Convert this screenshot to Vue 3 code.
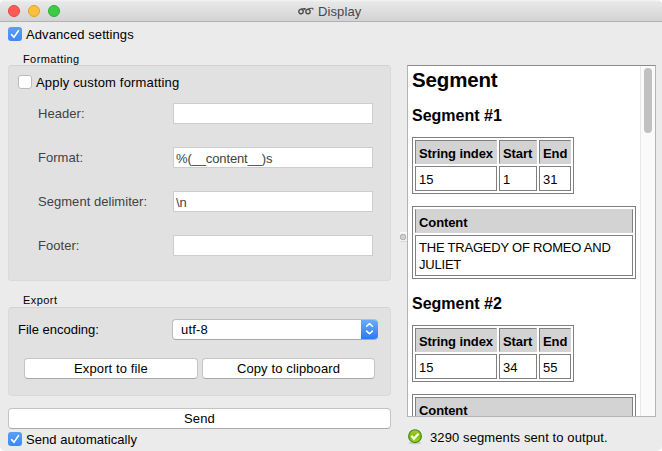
<script setup>
import { ref } from 'vue'

const advanced = ref(true)
const customFormatting = ref(false)
const autoSend = ref(true)

const fields = ref([
  { label: 'Header:', value: '' },
  { label: 'Format:', value: '%(__content__)s' },
  { label: 'Segment delimiter:', value: '\\n' },
  { label: 'Footer:', value: '' },
])

const segments = [
  { id: 1, index: 15, start: 1, end: 31, content: 'THE TRAGEDY OF ROMEO AND JULIET' },
  { id: 2, index: 15, start: 34, end: 55, content: '' },
]
</script>

<template>
  <div class="window">
    <header class="titlebar">
      <div class="lights">
        <i class="light red"></i><i class="light yellow"></i><i class="light green"></i>
      </div>
      <svg class="glasses" width="16" height="10" viewBox="0 0 16 10" fill="none" stroke="#505050">
        <ellipse cx="3" cy="5.6" rx="2.2" ry="2.2" stroke-width="1.4" />
        <ellipse cx="10" cy="5.6" rx="2.2" ry="2.2" stroke-width="1.4" />
        <path d="M2.6 3 Q5 2.4 7.8 2.6 M9.6 3 Q12 2.2 14.2 2.3 Q15.4 2.5 14.8 3.8 M5.4 4.6 Q6.4 2.8 7.8 2.6" stroke-width="1.1" />
      </svg>
      <span class="title">Display</span>
    </header>

    <main class="body">
      <section class="left">
        <label class="check" @click="advanced = !advanced">
          <i class="box" :class="{ on: advanced }">
            <svg v-if="advanced" width="14" height="14" viewBox="0 0 14 14"><path d="M3.6 7.6 6 10.2 10.5 3.6" fill="none" stroke="#fff" stroke-width="1.6" stroke-linecap="round" /></svg>
          </i>
          <span class="adv-text">Advanced settings</span>
        </label>

        <div class="caption formatting-caption">Formatting</div>
        <div class="group formatting">
          <label class="check" @click="customFormatting = !customFormatting">
            <i class="box" :class="{ on: customFormatting }"></i>
            <span class="custom-text">Apply custom formatting</span>
          </label>
          <div class="fields">
            <div v-for="f in fields" :key="f.label" class="field">
              <span class="field-label">{{ f.label }}</span>
              <div class="input">{{ f.value }}</div>
            </div>
          </div>
        </div>

        <div class="caption export-caption">Export</div>
        <div class="group export">
          <div class="encoding">
            <span class="encoding-label">File encoding:</span>
            <div class="select">
              <span>utf-8</span>
              <i class="arrows">
                <svg width="17" height="21" viewBox="0 0 17 21" fill="none" stroke="#fff" stroke-width="1.5" stroke-linecap="round" stroke-linejoin="round"><path d="M5.6 7.3 8.5 4.6 11.4 7.3M5.6 12.1 8.5 14.8 11.4 12.1" /></svg>
              </i>
            </div>
          </div>
          <div class="buttons">
            <button class="btn export-btn">Export to file</button>
            <button class="btn copy-btn">Copy to clipboard</button>
          </div>
        </div>

        <button class="btn send">Send</button>
        <label class="check auto" @click="autoSend = !autoSend">
          <i class="box" :class="{ on: autoSend }">
            <svg v-if="autoSend" width="14" height="14" viewBox="0 0 14 14"><path d="M3.6 7.6 6 10.2 10.5 3.6" fill="none" stroke="#fff" stroke-width="1.6" stroke-linecap="round" /></svg>
          </i>
          <span class="auto-text">Send automatically</span>
        </label>
      </section>

      <div class="splitter"><i class="grip"></i></div>

      <section class="right">
        <div class="viewer">
          <div class="document">
            <h1>Segment</h1>
            <article v-for="s in segments" :key="s.id" class="segment">
              <h2>Segment #{{ s.id }}</h2>
              <div class="table position">
                <b class="th wide">String index</b><b class="th">Start</b><b class="th">End</b>
                <span class="td">{{ s.index }}</span><span class="td">{{ s.start }}</span><span class="td">{{ s.end }}</span>
              </div>
              <div class="table content">
                <b class="th">Content</b>
                <span class="td text">{{ s.content }}</span>
              </div>
            </article>
          </div>
          <div class="scrollbar"><i class="thumb"></i></div>
        </div>
        <footer class="status">
          <svg width="16" height="16" viewBox="0 0 16 16">
            <defs>
              <linearGradient id="ok" x1="0" y1="0" x2="0" y2="1">
                <stop offset="0" stop-color="#a4ce35" />
                <stop offset=".5" stop-color="#80bd05" />
                <stop offset="1" stop-color="#9edc19" />
              </linearGradient>
            </defs>
            <ellipse cx="8" cy="14" rx="6.5" ry="1.4" fill="#cfcfcf" />
            <circle cx="8" cy="7.2" r="6.4" fill="url(#ok)" stroke="#43891c" stroke-width="1.1" />
            <path d="M4.3 6.8 7 9.5 11.6 4.7" fill="none" stroke="#fff" stroke-width="2.3" />
          </svg>
          <span class="status-text">3290 segments sent to output.</span>
        </footer>
      </section>
    </main>
  </div>
</template>

<style>
body {
  margin: 0;
  background: #fff;
}
</style>

<style scoped>
* {
  box-sizing: border-box;
}

.window {
  width: 662px;
  height: 451px;
  overflow: hidden;
  border-radius: 5px;
  background: #ebebeb;
  color: #000;
  font: 13px/16px "Liberation Sans", Arial, sans-serif;
}

.titlebar {
  display: flex;
  align-items: center;
  height: 22px;
  border-bottom: 1px solid #b1b1b1;
  background: linear-gradient(#f4f4f4 0, #e8e8e8 2px, #d3d3d3 100%);
}

.lights {
  display: flex;
  gap: 8px;
  width: 290px;
  padding-left: 8px;
}

.light {
  width: 12px;
  height: 12px;
  border: 1px solid;
  border-radius: 50%;
}

.red { background: #fc5b57; border-color: #e2463f; }
.yellow { background: #fbbf3d; border-color: #dfa02d; }
.green { background: #3bcb46; border-color: #2baf33; }

.glasses {
  margin-left: 8px;
}

.title {
  margin-left: 4px;
  padding-top: 2px;
  color: #474747;
  letter-spacing: 0.1px;
}

.body {
  display: flex;
  height: 429px;
  padding-left: 8px;
}

.left {
  width: 383px;
  padding-top: 5px;
}

.check {
  display: flex;
  align-items: center;
  gap: 4px;
  height: 14px;
}

.check span {
  padding-top: 2px;
}

.adv-text {
  letter-spacing: 0.09px;
}

.custom-text {
  letter-spacing: 0.17px;
}

.auto-text {
  letter-spacing: 0.07px;
}

.box {
  width: 14px;
  height: 14px;
  border: 1px solid #bcbcbc;
  border-radius: 3px;
  background: #fff;
}

.box.on {
  border: 0;
  background: linear-gradient(#5c9ff8, #4186f7);
}

.box svg {
  display: block;
}

.caption {
  padding-left: 15px;
  font-size: 11px;
  line-height: 14px;
}

.formatting-caption {
  margin-top: 11px;
  letter-spacing: 0.4px;
}

.export-caption {
  margin-top: 12px;
  letter-spacing: 0.45px;
}

.group {
  border: 1px solid #dadada;
  border-top-color: #d2d2d2;
  border-radius: 4px;
  background: #e1e1e1;
}

.formatting {
  height: 216px;
  padding: 9px 0 0 9px;
  margin-top: -1px;
}

.fields {
  display: grid;
  gap: 23px;
  padding: 14px 0 0 20px;
}

.field {
  display: flex;
  align-items: center;
  height: 21px;
  color: #424242;
}

.field-label {
  width: 135px;
  letter-spacing: 0.04px;
}

.input {
  width: 200px;
  height: 21px;
  padding: 3px 2px 0;
  border: 1px solid #cdcdcd;
  background: #fff;
  letter-spacing: -0.13px;
}

.export {
  height: 89px;
  padding-top: 11px;
}

.encoding {
  display: flex;
  align-items: center;
  padding-left: 9px;
}

.encoding-label {
  width: 154px;
}

.select {
  display: flex;
  align-items: center;
  justify-content: space-between;
  width: 206px;
  height: 21px;
  padding-left: 8px;
  overflow: hidden;
  border: 1px solid #bdbdbd;
  border-right: 0;
  border-bottom-color: #a9a9a9;
  border-radius: 4px;
  background: #fff;
  letter-spacing: 0.2px;
}

.arrows {
  width: 17px;
  height: 21px;
  background: linear-gradient(#6bb0fb, #2d74f7);
}

.arrows svg {
  display: block;
}

.buttons {
  display: flex;
  gap: 4px;
  padding: 18px 0 0 15px;
}

.btn {
  display: block;
  height: 21px;
  padding: 0;
  border: 1px solid #c4c4c4;
  border-bottom-color: #a9a9a9;
  border-radius: 4px;
  background: #fff;
  color: #000;
  font: inherit;
  letter-spacing: 0.12px;
}

.export-btn { width: 174px; }
.copy-btn { width: 173px; }

.send {
  width: 383px;
  margin-top: 12px;
}

.auto {
  margin-top: 3px;
}

.splitter {
  display: flex;
  align-items: center;
  width: 16px;
  padding: 0 0 0 9px;
}

.grip {
  width: 7px;
  height: 10px;
  border-top: 1px solid #fafafa;
  border-bottom: 1px solid #dadada;
  background: radial-gradient(circle at 3px 4px, #cfcfcf 0 2px, #b5b5b5 2.5px 3px, #f4f4f4 3.6px);
}

.right {
  width: 249px;
  padding-top: 43px;
}

.viewer {
  display: flex;
  height: 352px;
  overflow: hidden;
  border: 1px solid #b4b4b4;
  border-top-color: #8c8c8c;
  background: #fff;
}

.document {
  width: 232px;
  height: 350px;
  padding-left: 4px;
  overflow: hidden;
}

h1, h2 {
  margin: 0;
  font-weight: bold;
}

h1 {
  margin-top: 2px;
  font-size: 20.5px;
  line-height: 24px;
  letter-spacing: -0.15px;
}

h2 {
  padding-top: 14px;
  height: 45px;
  font-size: 16px;
  line-height: 20px;
}

.table {
  display: grid;
  gap: 2px;
  padding: 2px;
  border: 1px solid #808080;
}

.position {
  width: 162px;
  height: 57px;
  grid-template-columns: 82px 38px 32px;
  grid-template-rows: 24px 25px;
}

.content {
  width: 224px;
  height: 73px;
  margin-top: 12px;
  grid-template-rows: 24px 41px;
}

.segment + .segment h2 {
  height: 46px;
  padding-top: 15px;
}

.th, .td {
  padding: 4px 3px 0;
  border: 1px solid #808080;
  line-height: 17px;
  white-space: nowrap;
}

.th {
  border-bottom-color: #d3d3d3;
  background: #d3d3d3;
  letter-spacing: -0.1px;
}

.position .th {
  border-right-color: #d3d3d3;
}

.segment:first-of-type .content .th {
  border-top-color: #d3d3d3;
}

.text {
  padding-top: 3px;
  letter-spacing: -0.21px;
  white-space: normal;
}

.scrollbar {
  width: 15px;
  padding: 2px 0 0 3px;
  border-left: 1px solid #e8e8e8;
  background: #fafafa;
}

.thumb {
  display: block;
  width: 8px;
  height: 65px;
  border-radius: 4px;
  background: #c1c1c1;
}

.status {
  display: flex;
  align-items: center;
  gap: 7px;
  padding-top: 11px;
}

.status-text {
  padding-top: 2px;
  letter-spacing: 0.1px;
}
</style>
